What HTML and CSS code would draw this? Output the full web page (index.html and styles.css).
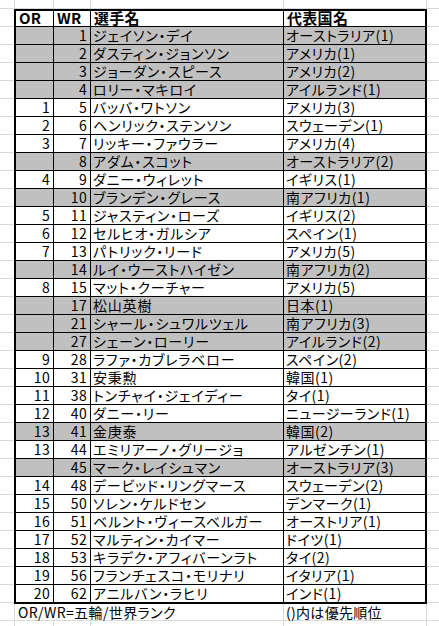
FILE: index.html
```html
<!DOCTYPE html>
<html lang="ja">
<head>
<meta charset="utf-8">
<title>選手一覧</title>
<link rel="stylesheet" href="styles.css">
</head>
<body>
<div class="sheet">
  <div class="r hd"><span>OR</span><span>WR</span><span>選手名</span><span>代表国名</span></div>
  <div class="r g"><span class="n"></span><span class="n">1</span><span>ジェイソン・デイ</span><span class="c">オーストラリア(1)</span></div>
  <div class="r g"><span class="n"></span><span class="n">2</span><span>ダスティン・ジョンソン</span><span class="c">アメリカ(1)</span></div>
  <div class="r g"><span class="n"></span><span class="n">3</span><span>ジョーダン・スピース</span><span class="c">アメリカ(2)</span></div>
  <div class="r g"><span class="n"></span><span class="n">4</span><span>ロリー・マキロイ</span><span class="c">アイルランド(1)</span></div>
  <div class="r"><span class="n">1</span><span class="n">5</span><span>バッバ・ワトソン</span><span class="c">アメリカ(3)</span></div>
  <div class="r"><span class="n">2</span><span class="n">6</span><span>ヘンリック・ステンソン</span><span class="c">スウェーデン(1)</span></div>
  <div class="r"><span class="n">3</span><span class="n">7</span><span>リッキー・ファウラー</span><span class="c">アメリカ(4)</span></div>
  <div class="r g"><span class="n"></span><span class="n">8</span><span>アダム・スコット</span><span class="c">オーストラリア(2)</span></div>
  <div class="r"><span class="n">4</span><span class="n">9</span><span>ダニー・ウィレット</span><span class="c">イギリス(1)</span></div>
  <div class="r g"><span class="n"></span><span class="n">10</span><span>ブランデン・グレース</span><span class="c">南アフリカ(1)</span></div>
  <div class="r"><span class="n">5</span><span class="n">11</span><span>ジャスティン・ローズ</span><span class="c">イギリス(2)</span></div>
  <div class="r"><span class="n">6</span><span class="n">12</span><span>セルヒオ・ガルシア</span><span class="c">スペイン(1)</span></div>
  <div class="r"><span class="n">7</span><span class="n">13</span><span>パトリック・リード</span><span class="c">アメリカ(5)</span></div>
  <div class="r g"><span class="n"></span><span class="n">14</span><span>ルイ・ウーストハイゼン</span><span class="c">南アフリカ(2)</span></div>
  <div class="r"><span class="n">8</span><span class="n">15</span><span>マット・クーチャー</span><span class="c">アメリカ(5)</span></div>
  <div class="r g"><span class="n"></span><span class="n">17</span><span>松山英樹</span><span class="c">日本(1)</span></div>
  <div class="r g"><span class="n"></span><span class="n">21</span><span>シャール・シュワルツェル</span><span class="c">南アフリカ(3)</span></div>
  <div class="r g"><span class="n"></span><span class="n">27</span><span>シェーン・ローリー</span><span class="c">アイルランド(2)</span></div>
  <div class="r"><span class="n">9</span><span class="n">28</span><span>ラファ・カブレラベロー</span><span class="c">スペイン(2)</span></div>
  <div class="r"><span class="n">10</span><span class="n">31</span><span>安秉勲</span><span class="c">韓国(1)</span></div>
  <div class="r"><span class="n">11</span><span class="n">38</span><span>トンチャイ・ジェイディー</span><span class="c">タイ(1)</span></div>
  <div class="r"><span class="n">12</span><span class="n">40</span><span>ダニー・リー</span><span class="c">ニュージーランド(1)</span></div>
  <div class="r g"><span class="n">13</span><span class="n">41</span><span>金庚泰</span><span class="c">韓国(2)</span></div>
  <div class="r"><span class="n">13</span><span class="n">44</span><span>エミリアーノ・グリージョ</span><span class="c">アルゼンチン(1)</span></div>
  <div class="r g"><span class="n"></span><span class="n">45</span><span>マーク・レイシュマン</span><span class="c">オーストラリア(3)</span></div>
  <div class="r"><span class="n">14</span><span class="n">48</span><span>デービッド・リングマース</span><span class="c">スウェーデン(2)</span></div>
  <div class="r"><span class="n">15</span><span class="n">50</span><span>ソレン・ケルドセン</span><span class="c">デンマーク(1)</span></div>
  <div class="r"><span class="n">16</span><span class="n">51</span><span>ベルント・ヴィースベルガー</span><span class="c">オーストリア(1)</span></div>
  <div class="r"><span class="n">17</span><span class="n">52</span><span>マルティン・カイマー</span><span class="c">ドイツ(1)</span></div>
  <div class="r"><span class="n">18</span><span class="n">53</span><span>キラデク・アフィバーンラト</span><span class="c">タイ(2)</span></div>
  <div class="r"><span class="n">19</span><span class="n">56</span><span>フランチェスコ・モリナリ</span><span class="c">イタリア(1)</span></div>
  <div class="r"><span class="n">20</span><span class="n">62</span><span>アニルバン・ラヒリ</span><span class="c">インド(1)</span></div>
</div>
<div class="foot">
  <span class="note1">OR/WR=五輪/世界ランク</span>
  <span class="note2">()内は優先順位</span>
</div>
</body>
</html>
```
FILE: styles.css
```css
html {
  background: #fff;
}
body {
  margin: 0;
  width: 439px;
  height: 626px;
  overflow: hidden;
  font-family: "Noto Sans CJK JP", "Noto Sans", sans-serif;
  font-size: 14px;
  color: #000;
  font-feature-settings: "palt";
  background-color: #fff;
  background-image:
    linear-gradient(#d9d9d9, #d9d9d9),
    linear-gradient(#d9d9d9, #d9d9d9),
    linear-gradient(#d9d9d9, #d9d9d9),
    linear-gradient(#d9d9d9, #d9d9d9),
    linear-gradient(#d9d9d9, #d9d9d9),
    linear-gradient(to bottom, #d9d9d9 1px, transparent 1px);
  background-size: 1px 100%, 1px 100%, 1px 100%, 1px 100%, 1px 100%, 100% 18px;
  background-position: 14px 0, 53px 0, 90px 0, 283px 0, 426px 0, 0 8px;
  background-repeat: no-repeat, no-repeat, no-repeat, no-repeat, no-repeat, repeat;
}
.sheet {
  display: grid;
  grid-template-columns: 37px 36px 192px 141px;
  grid-template-rows: 15px;
  grid-auto-rows: 17px;
  gap: 1px;
  width: max-content;
  margin: 9px 0 0 14px;
  border: 2px solid #000;
  background: #000;
}
.r {
  display: contents;
}
.r > span {
  display: block;
  background: #fff;
  line-height: 17px;
  padding: 0 0 0 2px;
  letter-spacing: 0.8px;
  white-space: nowrap;
}
.r > span.c {
  letter-spacing: 0.5px;
}
.r > span.n {
  text-align: right;
  letter-spacing: 0.3px;
  padding: 0 3px 0 0;
}
.r.g > span {
  background: #c0c0c0;
}
.r.hd > span {
  font-size: 15px;
  font-weight: bold;
  line-height: 13px;
  letter-spacing: 0.3px;
  padding: 0 3px;
}
.foot {
  display: flex;
  margin-left: 15px;
  height: 16px;
  line-height: 16px;
}
.note1 {
  width: 268px;
  padding-left: 3px;
  box-sizing: border-box;
  letter-spacing: 0.4px;
  background: #fff;
}
.note2 {
  margin-left: 1px;
  padding: 0 2px;
  letter-spacing: 0.3px;
  background: #fff;
}
```
